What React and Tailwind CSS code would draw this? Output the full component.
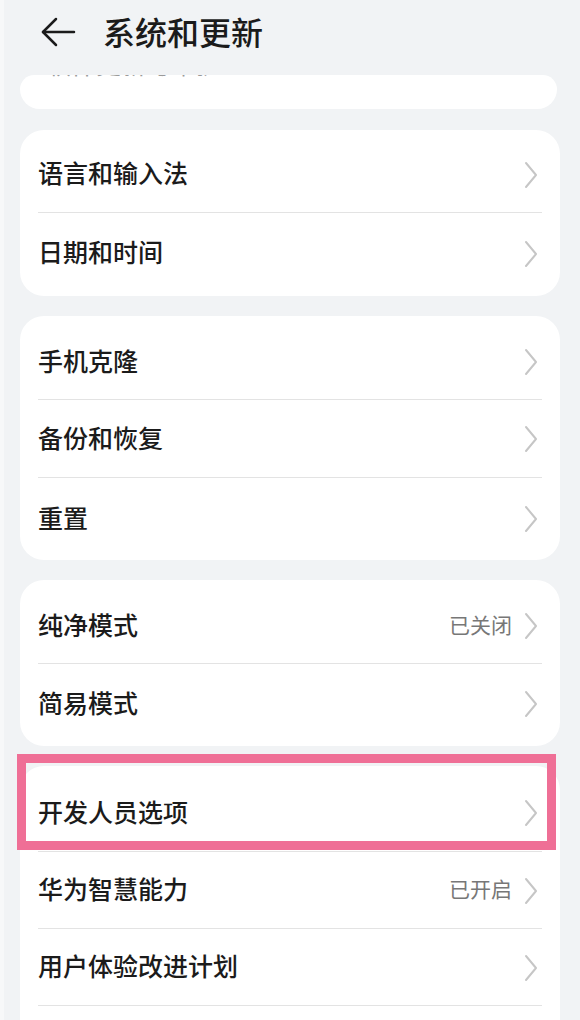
import React from 'react';

const font = { fontFamily: '"Noto Sans CJK SC", "Noto Sans", sans-serif' };

function Chevron() {
  return (
    <svg width="14" height="28" viewBox="0 0 14 28" className="shrink-0">
      <polyline points="2,2 12,14 2,26" fill="none" stroke="#c6c6c6" strokeWidth="2" strokeLinecap="round" strokeLinejoin="round" />
    </svg>
  );
}

function Row({ label, value, height = 'h-[83px]', divider = true, textOffset = '' }) {
  return (
    <div className={`relative flex items-center ${height} pl-[18px] pr-[22px] ${textOffset}`}>
      <span className="flex-1 text-[25px] font-medium text-[#1b1b1b] leading-none -translate-y-[2px]">{label}</span>
      {value && <span className="text-[21px] text-[#777777] leading-none mr-[12px] -translate-y-[2px]">{value}</span>}
      <Chevron />
      {divider && <div className="absolute bottom-0 left-[18px] right-[18px] h-px bg-[#e3e3e3]" />}
    </div>
  );
}

export default function App() {
  return (
    <div className="w-[580px] h-[1020px] overflow-hidden bg-[#f1f3f5] border-l-[4px] border-[#f7f8f9]" style={font}>
      {/* Header */}
      <div className="flex items-center h-[64px] pl-[36px]">
        <svg width="36" height="30" viewBox="0 0 36 30">
          <polyline points="16,2 3,15 16,28" fill="none" stroke="#1b1b1b" strokeWidth="2.5" strokeLinecap="round" strokeLinejoin="round" />
          <line x1="3" y1="15" x2="34" y2="15" stroke="#1b1b1b" strokeWidth="2.5" strokeLinecap="round" />
        </svg>
        <span className="ml-[27px] text-[32px] font-medium text-[#1b1b1b] leading-none -translate-y-[1px]">系统和更新</span>
      </div>

      {/* Cut-off card */}
      <div className="mt-[11px] ml-[16px] w-[537px] h-[34px] bg-white rounded-b-[22px] rounded-t-[16px] overflow-hidden relative">
        <span className="absolute left-[26px] top-[-24px] text-[25px] text-[#9a9a9a] leading-none">软件更新与维护</span>
      </div>

      <div className="flex flex-col gap-[20px] mt-[21px] ml-[16px] w-[540px]">
        <div className="bg-white rounded-[24px] overflow-hidden">
          <Row label="语言和输入法" textOffset="pt-[6px]" />
          <Row label="日期和时间" divider={false} textOffset="pb-[2px]" />
        </div>

        <div className="bg-white rounded-[24px] overflow-hidden">
          <Row label="手机克隆" height="h-[84px]" textOffset="pt-[8px]" />
          <Row label="备份和恢复" height="h-[78px]" />
          <Row label="重置" height="h-[82px]" divider={false} />
        </div>

        <div className="bg-white rounded-[24px] overflow-hidden">
          <Row label="纯净模式" value="已关闭" height="h-[84px]" textOffset="pt-[8px]" />
          <Row label="简易模式" height="h-[82px]" divider={false} textOffset="pb-[2px]" />
        </div>

        <div className="relative bg-white rounded-t-[24px]">
          <Row label="开发人员选项" height="h-[86px]" textOffset="pt-[8px]" />
          <Row label="华为智慧能力" value="已开启" height="h-[77px]" />
          <Row label="用户体验改进计划" height="h-[77px]" />
          <div className="h-[40px]" />
          <div className="absolute top-[-12px] left-[-3px] w-[539px] h-[96px] border-[9px] border-[#ef6f96]" />
        </div>
      </div>
    </div>
  );
}
